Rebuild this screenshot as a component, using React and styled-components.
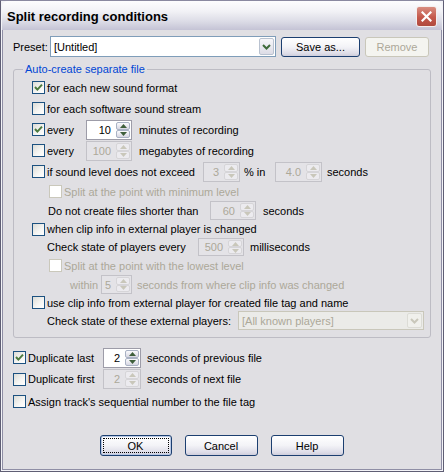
import styled, { createGlobalStyle } from "styled-components";

const GlobalStyle = createGlobalStyle`
  html, body {
    margin: 0;
    padding: 0;
    background: #e0dfe3;
  }
  body {
    font-family: "Liberation Sans", Arial, sans-serif;
    font-size: 11px;
    color: #000;
  }
`;

const DIS = "#aca899";

export default function App() {
  return (
    <>
      <GlobalStyle />
      <Window>
        <TitleBar>
          <Title>Split recording conditions</Title>
          <CloseButton>
            <svg width="11" height="11" viewBox="0 0 11 11">
              <path d="M1.5 1.5 L9.5 9.5 M9.5 1.5 L1.5 9.5" stroke="#fff" strokeWidth="2.2" strokeLinecap="square" />
            </svg>
          </CloseButton>
        </TitleBar>

        <Body>
          <PresetRow>
            <Text w={37}>Preset:</Text>
            <Combo w={226} h={21} value="[Untitled]" />
            <Button w={79} h={20}>Save as...</Button>
            <Button w={64} h={20} disabled>Remove</Button>
          </PresetRow>

          <Group>
            <Legend>Auto-create separate file</Legend>
            <Row h={21}>
              <Check checked label="for each new sound format" />
            </Row>
            <Row h={21}>
              <Check label="for each software sound stream" />
            </Row>
            <Row h={21}>
              <Check checked w={54} label="every" />
              <Spin w={46} h={20} value="10" />
              <Text ml={7}>minutes of recording</Text>
            </Row>
            <Row h={21}>
              <Check w={54} label="every" />
              <Spin w={46} h={20} value="100" disabled />
              <Text ml={7}>megabytes of recording</Text>
            </Row>
            <Row h={21}>
              <Check w={171} label="if sound level does not exceed" />
              <Spin w={37} h={20} value="3" disabled />
              <Text w={31} ml={4}>% in</Text>
              <Spin w={47} h={20} value="4.0" disabled />
              <Text ml={5}>seconds</Text>
            </Row>
            <Row h={19} indent={17}>
              <Check disabled label="Split at the point with minimum level" />
            </Row>
            <Row h={19} indent={16}>
              <Text w={162}>Do not create files shorter than</Text>
              <Spin w={46} h={19} value="60" disabled />
              <Text ml={7}>seconds</Text>
            </Row>
            <Row h={18}>
              <Check label="when clip info in external player is changed" />
            </Row>
            <Row h={18} indent={15}>
              <Text w={151}>Check state of players every</Text>
              <Spin w={46} h={18} value="500" disabled />
              <Text ml={6}>milliseconds</Text>
            </Row>
            <Row h={19} indent={17}>
              <Check disabled label="Split at the point with the lowest level" />
            </Row>
            <Row h={19} indent={38}>
              <Text w={31} disabled>within</Text>
              <Spin w={31} h={19} value="5" disabled />
              <Text ml={5} disabled>seconds from where clip info was changed</Text>
            </Row>
            <Row h={17}>
              <Check label="use clip info from external player for created file tag and name" />
            </Row>
            <Row h={19} indent={15}>
              <Text w={191}>Check state of these external players:</Text>
              <Combo w={186} h={19} value="[All known players]" disabled />
            </Row>
          </Group>

          <Options>
            <Row h={21} indent={0}>
              <Check checked w={90} label="Duplicate last" />
              <Spin w={38} h={20} value="2" />
              <Text ml={6}>seconds of previous file</Text>
            </Row>
            <Row h={22} indent={0}>
              <Check w={90} label="Duplicate first" />
              <Spin w={38} h={20} value="2" disabled />
              <Text ml={6}>seconds of next file</Text>
            </Row>
            <Row h={23} indent={0}>
              <Check label="Assign track's sequential number to the file tag" />
            </Row>
          </Options>

          <ButtonRow>
            <Button w={72} h={21} primary>OK</Button>
            <Button w={73} h={21}>Cancel</Button>
            <Button w={73} h={21}>Help</Button>
          </ButtonRow>
        </Body>
      </Window>
    </>
  );
}

function Check({ checked, disabled, label, w }) {
  return (
    <CheckWrap w={w}>
      <Box disabled={disabled}>
        {checked && (
          <svg width="11" height="11" viewBox="0 0 11 11">
            <path d="M2 5 L4.4 7.6 L9 2.6" fill="none" stroke="#4b7a3e" strokeWidth="2" />
          </svg>
        )}
      </Box>
      <CheckText disabled={disabled}>{label}</CheckText>
    </CheckWrap>
  );
}

function Arrow({ up, disabled }) {
  const c = disabled ? "#c9c7ba" : "#3e5f3b";
  return (
    <svg width="7" height="4" viewBox="0 0 7 4">
      <path d={up ? "M0 4 L3.5 0 L7 4 Z" : "M0 0 L3.5 4 L7 0 Z"} fill={c} />
    </svg>
  );
}

function Spin({ w, h, value, disabled }) {
  return (
    <SpinBox w={w} h={h} disabled={disabled}>
      <SpinValue disabled={disabled}>{value}</SpinValue>
      <SpinButtons>
        <SpinBtn disabled={disabled}><Arrow up disabled={disabled} /></SpinBtn>
        <SpinBtn disabled={disabled}><Arrow disabled={disabled} /></SpinBtn>
      </SpinButtons>
    </SpinBox>
  );
}

function Combo({ w, h, value, disabled }) {
  return (
    <ComboBox w={w} h={h} disabled={disabled}>
      <ComboText disabled={disabled}>{value}</ComboText>
      <DropButton disabled={disabled}>
        <svg width="9" height="6" viewBox="0 0 9 6">
          <path d="M1 1 L4.5 4.5 L8 1" fill="none" stroke={disabled ? "#c9c7ba" : "#3e6b3a"} strokeWidth="2" />
        </svg>
      </DropButton>
    </ComboBox>
  );
}

const Window = styled.div`
  width: 444px;
  height: 472px;
  box-sizing: border-box;
  border: 1px solid #5f5e74;
  border-top-color: #8a89a0;
  padding: 0 1px 1px 1px;
  background: #f3f3f7;
  display: flex;
  flex-direction: column;
  overflow: hidden;
`;

const TitleBar = styled.div`
  height: 29px;
  flex: none;
  display: flex;
  align-items: center;
  justify-content: space-between;
  padding: 0 5px 0 5px;
  background: linear-gradient(to bottom, #fdfdfe 0%, #f2f2f6 35%, #dcdce6 70%, #c4c3d5 100%);
  border-radius: 6px 6px 0 0;
`;

const Title = styled.div`
  font-family: "Liberation Sans", Arial, sans-serif;
  font-weight: bold;
  font-size: 13px;
  color: #000;
  padding-top: 1px;
`;

const CloseButton = styled.div`
  width: 19px;
  height: 19px;
  border: 1px solid #f4eeee;
  border-radius: 3px;
  background: linear-gradient(to bottom, #d88d80, #c4584b 55%, #b04a3e);
  display: flex;
  align-items: center;
  justify-content: center;
  margin-top: 1px;
`;

const Body = styled.div`
  flex: 1;
  background: #e0dfe3;
  border: 1px solid #8f8ea5;
  border-top: none;
  padding: 6px 10px 0 10px;
  display: flex;
  flex-direction: column;
`;

const PresetRow = styled.div`
  display: flex;
  align-items: center;
  gap: 5px;
  height: 21px;
  & > span:first-child {
    margin-right: -5px;
  }
`;

const Text = styled.span`
  display: inline-block;
  flex: none;
  width: ${(p) => (p.w ? `${p.w}px` : "auto")};
  margin-left: ${(p) => p.ml || 0}px;
  box-sizing: border-box;
  color: ${(p) => (p.disabled ? DIS : "#000")};
  white-space: nowrap;
`;

const ComboBox = styled.div`
  width: ${(p) => p.w}px;
  height: ${(p) => p.h}px;
  box-sizing: border-box;
  border: 1px solid ${(p) => (p.disabled ? "#c9c7ba" : "#7f9db9")};
  background: ${(p) => (p.disabled ? "#ebebe8" : "#fff")};
  display: flex;
  align-items: stretch;
  padding: 1px;
  flex: none;
`;

const ComboText = styled.div`
  flex: 1;
  padding-left: 2px;
  display: flex;
  align-items: center;
  color: ${(p) => (p.disabled ? DIS : "#000")};
`;

const DropButton = styled.div`
  width: 15px;
  box-sizing: border-box;
  border: 1px solid ${(p) => (p.disabled ? "#dcdcd6" : "#b9c2d0")};
  border-radius: 2px;
  background: ${(p) =>
    p.disabled ? "#f0f0ec" : "linear-gradient(to bottom, #f7f7fa, #dcdce6)"};
  display: flex;
  align-items: center;
  justify-content: center;
`;

const Button = styled.div`
  width: ${(p) => p.w}px;
  height: ${(p) => p.h}px;
  box-sizing: border-box;
  flex: none;
  position: relative;
  border: 1px solid ${(p) => (p.disabled ? "#c9c7ba" : "#1c3f70")};
  border-radius: 3px;
  background: ${(p) =>
    p.disabled ? "#f4f4f0" : "linear-gradient(to bottom, #ffffff 0%, #f3f3f7 50%, #dedde8 85%, #cfcedb 100%)"};
  color: ${(p) => (p.disabled ? DIS : "#000")};
  display: flex;
  align-items: center;
  justify-content: center;
  box-shadow: ${(p) => (p.primary ? "inset 0 0 0 1px #b8c8e4" : "none")};
  &::after {
    content: "";
    display: ${(p) => (p.primary ? "block" : "none")};
    position: absolute;
    inset: 2px;
    border: 1px dotted #000;
  }
`;

const Group = styled.fieldset`
  margin: 5px 0 0 0;
  padding: 1px 0 7px 18px;
  border: 1px solid #bdbcc4;
  border-radius: 3px;
  min-width: 0;
`;

const Legend = styled.legend`
  color: #0046d5;
  padding: 0 2px;
  margin-left: -9px;
  line-height: 14px;
  font-size: 11px;
`;

const Row = styled.div`
  display: flex;
  align-items: center;
  height: ${(p) => p.h}px;
  padding-left: ${(p) => p.indent || 0}px;
`;

const CheckWrap = styled.div`
  display: flex;
  align-items: center;
  gap: 2px;
  flex: none;
  width: ${(p) => (p.w ? `${p.w}px` : "auto")};
`;

const Box = styled.div`
  width: 13px;
  height: 13px;
  box-sizing: border-box;
  flex: none;
  border: 1px solid ${(p) => (p.disabled ? "#cac8bb" : "#1c5180")};
  background: ${(p) => (p.disabled ? "#fff" : "linear-gradient(135deg, #dcdcd7 0%, #f6f6f4 60%, #ffffff 100%)")};
  display: flex;
  align-items: center;
  justify-content: center;
`;

const CheckText = styled.span`
  color: ${(p) => (p.disabled ? DIS : "#000")};
  white-space: nowrap;
`;

const SpinBox = styled.div`
  width: ${(p) => p.w}px;
  height: ${(p) => p.h}px;
  box-sizing: border-box;
  flex: none;
  border: 1px solid ${(p) => (p.disabled ? "#c3c2c8" : "#9d9ca8")};
  background: ${(p) => (p.disabled ? "#e4e3e7" : "#fff")};
  display: flex;
  padding: 1px;
`;

const SpinValue = styled.div`
  flex: 1;
  text-align: right;
  padding-right: 5px;
  display: flex;
  align-items: center;
  justify-content: flex-end;
  color: ${(p) => (p.disabled ? DIS : "#000")};
`;

const SpinButtons = styled.div`
  width: 14px;
  display: flex;
  flex-direction: column;
`;

const SpinBtn = styled.div`
  flex: 1;
  box-sizing: border-box;
  border: 1px solid ${(p) => (p.disabled ? "#d6d5d8" : "#a9b2c4")};
  border-radius: 2px;
  background: ${(p) => (p.disabled ? "#ecebef" : "linear-gradient(to bottom, #fbfbfd, #d7d7e2)")};
  display: flex;
  align-items: center;
  justify-content: center;
`;

const Options = styled.div`
  margin-top: 9px;
  display: flex;
  flex-direction: column;
`;

const ButtonRow = styled.div`
  margin-top: 22px;
  display: flex;
  justify-content: center;
  gap: 13px;
  padding-right: 1px;
`;
